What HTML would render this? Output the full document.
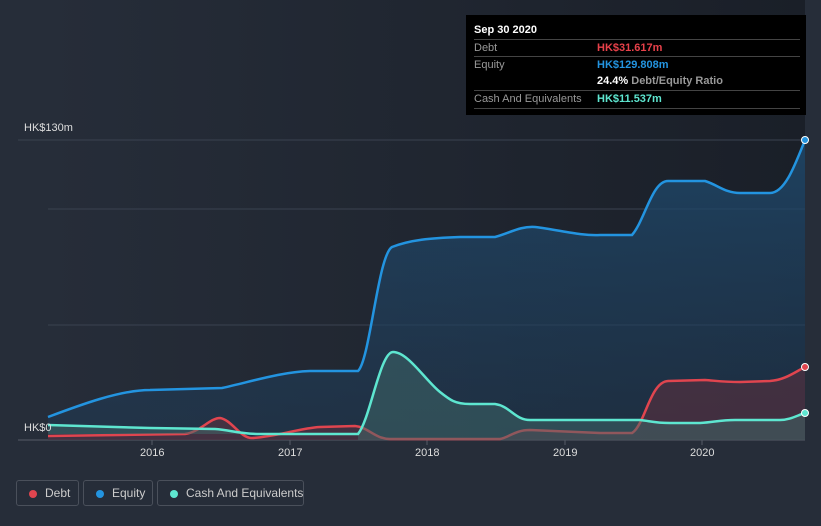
<!DOCTYPE html>
<html><head><style>
body{margin:0;width:821px;height:526px;background:#262d39;font-family:"Liberation Sans",sans-serif;overflow:hidden;position:relative}
.tt{position:absolute;left:466px;top:15px;width:340px;height:100px;background:#000;color:#fff;font-size:11px}
.row{position:absolute;left:8px;width:326px;border-top:1px solid #444;height:17px;line-height:17px;color:#999}
.row span{position:absolute;left:123px;font-weight:bold}
.leg{position:absolute;top:480px;height:26px;border:1px solid #4a505b;border-radius:3px;color:#ccc;font-size:12px;line-height:24px;box-sizing:border-box;white-space:nowrap}
.leg i{position:absolute;left:12px;top:9px;width:8px;height:8px;border-radius:50%}
.lbl{position:absolute;color:#ddd;font-size:11px}
</style></head><body>
<svg width="821" height="526" style="position:absolute;left:0;top:0">
<defs>
<linearGradient id="bg" x1="0" x2="1"><stop offset="0" stop-color="#262d39"/><stop offset="1" stop-color="#1a1f28"/></linearGradient>
<linearGradient id="eq" x1="0" y1="0" x2="0" y2="1"><stop offset="0" stop-color="#1f4a6e" stop-opacity=".8"/><stop offset="1" stop-color="#1f3a55" stop-opacity=".5"/></linearGradient>
</defs>
<rect x="48" y="0" width="757" height="440" fill="url(#bg)"/>
<g stroke="#3a4250" stroke-width="1"><line x1="18" y1="140" x2="805" y2="140"/><line x1="48" y1="209" x2="805" y2="209"/><line x1="48" y1="325" x2="805" y2="325"/><line x1="18" y1="440" x2="805" y2="440" stroke="#555c66"/></g>
<g stroke="#555c66"><line x1="152" y1="440" x2="152" y2="445"/><line x1="290" y1="440" x2="290" y2="445"/><line x1="427" y1="440" x2="427" y2="445"/><line x1="565" y1="440" x2="565" y2="445"/><line x1="702" y1="440" x2="702" y2="445"/></g>
<path d="M48,417 C80,405 120,390 150,390 L222,388 C250,382 280,372 310,371 L358,371 C370,360 378,255 392,247 C410,240 430,238 460,237 L495,237 C510,233 520,226 535,227 C560,230 580,236 600,235 L632,235 C645,220 652,181 668,181 L705,181 C718,185 725,193 740,193 L770,193 C785,193 795,165 805,140 L805,440 L48,440Z" fill="url(#eq)"/>
<path d="M48,417 C80,405 120,390 150,390 L222,388 C250,382 280,372 310,371 L358,371 C370,360 378,255 392,247 C410,240 430,238 460,237 L495,237 C510,233 520,226 535,227 C560,230 580,236 600,235 L632,235 C645,220 652,181 668,181 L705,181 C718,185 725,193 740,193 L770,193 C785,193 795,165 805,140" fill="none" stroke="#2394e0" stroke-width="2.5"/>
<path d="M48,436 L185,434 C200,432 210,418 220,418 C232,420 240,438 252,438 C275,437 300,428 320,427 L355,426 C368,427 375,439 390,439 L500,439 C510,437 515,430 530,430 L600,433 L632,433 C645,425 650,382 668,381 L705,380 C718,381 725,382 740,382 L770,381 C785,380 795,372 805,367 L805,440 L48,440Z" fill="#5a3040" fill-opacity=".6"/>
<path d="M48,436 L185,434 C200,432 210,418 220,418 C232,420 240,438 252,438 C275,437 300,428 320,427 L355,426 C368,427 375,439 390,439 L500,439 C510,437 515,430 530,430 L600,433 L632,433 C645,425 650,382 668,381 L705,380 C718,381 725,382 740,382 L770,381 C785,380 795,372 805,367" fill="none" stroke="#e0454f" stroke-width="2.5"/>
<path d="M48,425 L150,428 L215,429 C230,430 240,434 260,434 L358,434 C370,420 380,352 393,352 C408,352 425,380 440,392 C450,400 455,404 470,404 L495,404 C510,406 515,420 530,420 L640,420 C650,421 655,423 670,423 L700,423 C715,422 720,420 735,420 L780,420 C790,420 798,415 805,413 L805,440 L358,440 L358,434 L48,434Z" fill="#3f6a6a" fill-opacity=".5"/>
<path d="M48,425 L150,428 L215,429 C230,430 240,434 260,434 L358,434 C370,420 380,352 393,352 C408,352 425,380 440,392 C450,400 455,404 470,404 L495,404 C510,406 515,420 530,420 L640,420 C650,421 655,423 670,423 L700,423 C715,422 720,420 735,420 L780,420 C790,420 798,415 805,413" fill="none" stroke="#5ee6d0" stroke-width="2.5"/>
<circle cx="805" cy="140" r="3.5" fill="#2394e0" stroke="#fff" stroke-width="1"/>
<circle cx="805" cy="367" r="3.5" fill="#e0454f" stroke="#fff" stroke-width="1"/>
<circle cx="805" cy="413" r="3.5" fill="#5ee6d0" stroke="#fff" stroke-width="1"/>
</svg>
<div class="lbl" style="left:24px;top:122px">HK$130m</div>
<div class="lbl" style="left:24px;top:422px">HK$0</div>
<div class="lbl" style="left:140px;top:447px">2016</div>
<div class="lbl" style="left:278px;top:447px">2017</div>
<div class="lbl" style="left:415px;top:447px">2018</div>
<div class="lbl" style="left:553px;top:447px">2019</div>
<div class="lbl" style="left:690px;top:447px">2020</div>
<div class="tt">
<div style="position:absolute;left:8px;top:9px;font-weight:bold">Sep 30 2020</div>
<div class="row" style="top:24px">Debt<span style="color:#e8414a">HK$31.617m</span></div>
<div class="row" style="top:41px">Equity<span style="color:#2394e0">HK$129.808m</span></div>
<div class="row" style="top:58px;border-top:none"><span style="color:#fff">24.4% <b style="color:#999">Debt/Equity Ratio</b></span></div>
<div class="row" style="top:75px">Cash And Equivalents<span style="color:#5ee6d0">HK$11.537m</span></div>
<div class="row" style="top:93px;height:0"></div>
</div>
<div class="leg" style="left:16px;width:63px"><i style="background:#e0454f"></i><span style="position:absolute;left:28px">Debt</span></div>
<div class="leg" style="left:83px;width:70px"><i style="background:#2394e0"></i><span style="position:absolute;left:28px">Equity</span></div>
<div class="leg" style="left:157px;width:147px"><i style="background:#5ee6d0"></i><span style="position:absolute;left:28px">Cash And Equivalents</span></div>
</body></html>
